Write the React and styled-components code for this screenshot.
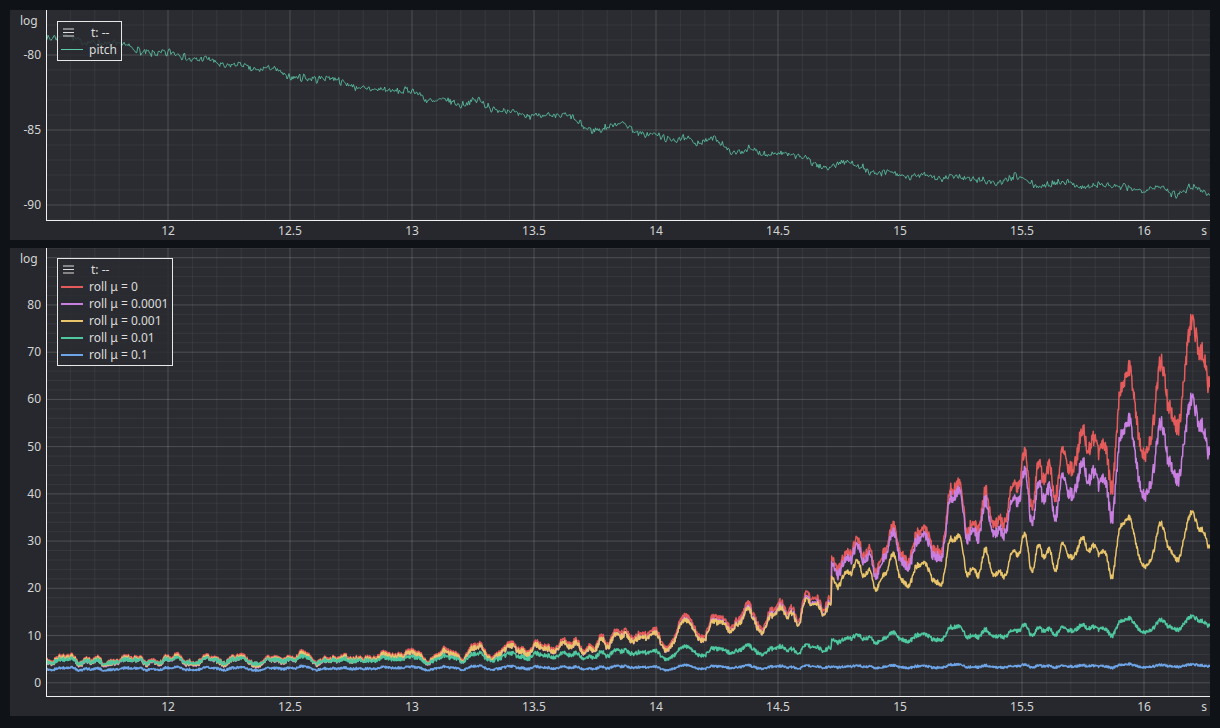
import React, { useMemo } from "react";
import styled, { createGlobalStyle } from "styled-components";

const Global = createGlobalStyle`
  html, body { margin: 0; padding: 0; background: #0f1217; }
  body { font-family: "Noto Sans", "Open Sans", sans-serif; }
`;

const Page = styled.div`
  width: 1220px; height: 728px; box-sizing: border-box;
  padding: 10px 10px 12px 10px;
  display: flex; flex-direction: column; gap: 8px;
  background: #0f1217;
`;
const Panel = styled.div`
  position: relative;
  height: ${(p) => p.h}px;
  background: #26282d;
`;
const Legend = styled.div`
  position: absolute; left: ${(p) => p.x}px; top: ${(p) => p.y}px;
  border: 1px solid #e8e8e8; background: rgba(42,44,49,0.85);
  padding: 2px 4px 2px 3px; color: #dcdcdc; font-size: 12px; line-height: 17px;
`;
const LegendRow = styled.div`
  display: flex; align-items: center; gap: 6px; white-space: nowrap;
`;
const Swatch = styled.span`
  display: inline-block; width: 22px; height: ${(p) => (p.thin ? 1 : 2)}px;
  background: ${(p) => p.c};
`;
const Burger = styled.span`
  display: inline-flex; width: 22px; justify-content: flex-start; padding-left: 2px;
`;

function rng(seed) {
  return function () {
    seed |= 0; seed = (seed + 0x6d2b79f5) | 0;
    let t = Math.imul(seed ^ (seed >>> 15), 1 | seed);
    t = (t + Math.imul(t ^ (t >>> 7), 61 | t)) ^ t;
    return ((t ^ (t >>> 14)) >>> 0) / 4294967296;
  };
}
function makeOsc(seed, n, fmin, fmax) {
  const r = rng(seed);
  const comps = [];
  for (let i = 0; i < n; i++) comps.push([fmin + r() * (fmax - fmin), r() * 6.28, 0.5 + r()]);
  const norm = comps.reduce((a, c) => a + c[2], 0);
  return (t) => comps.reduce((a, c) => a + c[2] * Math.sin(c[0] * t * 6.283 + c[1]), 0) / norm;
}

const X0 = 11.5, PXU = 244, LEFT = 36;

function Chart({ w, h, plotH, yMin, yMax, majorY, minorY, series, lw }) {
  const plotW = w - LEFT;
  const sx = (t) => LEFT + (t - X0) * PXU;
  const sy = (v) => ((yMax - v) / (yMax - yMin)) * plotH;
  const xMax = X0 + plotW / PXU;
  const grid = [];
  for (let i = 1; X0 + i * 0.1 < xMax; i++) {
    const t = X0 + i * 0.1;
    const major = i % 5 === 0;
    grid.push(<line key={"x" + i} x1={sx(t)} x2={sx(t)} y1={0} y2={plotH} stroke={major ? "rgba(255,255,255,0.17)" : "rgba(255,255,255,0.06)"} />);
  }
  for (let v = Math.ceil(yMin / minorY) * minorY; v < yMax; v += minorY) {
    const major = Math.abs(v / majorY - Math.round(v / majorY)) < 0.01;
    grid.push(<line key={"y" + v} x1={LEFT} x2={w} y1={sy(v)} y2={sy(v)} stroke={major ? "rgba(255,255,255,0.17)" : "rgba(255,255,255,0.06)"} />);
  }
  const xl = [];
  for (let i = 0; i < 9; i++) {
    const t = 12 + i * 0.5;
    xl.push(<text key={i} x={sx(t)} y={plotH + 15} textAnchor="middle">{i % 2 ? t.toFixed(1) : String(t)}</text>);
  }
  const yl = [];
  for (let v = Math.ceil(yMin / majorY) * majorY; v < yMax; v += majorY)
    if (sy(v) > 30) yl.push(<text key={v} x={LEFT - 5} y={sy(v) + 4} textAnchor="end">{v}</text>);
  return (
    <svg width={w} height={h} style={{ display: "block" }} fontFamily="Noto Sans, sans-serif" fontSize="12" fill="#d4d4d4">
      <rect x={LEFT} y={0} width={plotW} height={plotH} fill="#2a2c31" />
      {grid}
      <clipPath id={"c" + h}><rect x={LEFT} y={0} width={plotW} height={plotH} /></clipPath>
      <g clipPath={`url(#c${h})`}>
        {series.map((s, i) => (
          <polyline key={i} fill="none" stroke={s.c} strokeWidth={lw} strokeLinejoin="round"
            points={s.pts.map(([t, v]) => `${sx(t).toFixed(1)},${sy(v).toFixed(1)}`).join(" ")} />
        ))}
      </g>
      <line x1={LEFT + 0.5} x2={LEFT + 0.5} y1={0} y2={plotH} stroke="#f0f0f0" />
      <line x1={LEFT} x2={w} y1={plotH + 0.5} y2={plotH + 0.5} stroke="#f0f0f0" />
      {xl}{yl}
      <text x={10} y={15}>log</text>
      <text x={w - 6} y={plotH + 15} textAnchor="middle">s</text>
    </svg>
  );
}

function useData() {
  return useMemo(() => {
    const N = 2400, tEnd = 16.3;
    const ts = []; for (let i = 0; i <= N; i++) ts.push(X0 + (i / N) * (tEnd - X0));
    const r = rng(7);
    const o1 = makeOsc(3, 9, 2.5, 9), o2 = makeOsc(11, 8, 10, 30);
    const o3 = makeOsc(21, 6, 1, 4), o4 = makeOsc(5, 10, 20, 60);
    const pts = [];
    for (let i = 0; i <= 1200; i++) pts.push(X0 + (i / 1200) * (tEnd - X0));
    const pbase = (t) => (t < 15 ? -78.6 - 9.4 * (t - X0) / 3.5 : -88 - 0.9 * (t - 15));
    const pitch = pts.map((t) => [t, pbase(t) + 0.45 * o3(t * 1.5) + 0.35 * o1(t) + 0.25 * o4(t) + (r() - 0.5) * 0.35]);
    const jump = 14.72;
    const env = (t) => (t < jump ? 5 + 13 * Math.pow((t - X0) / (jump - X0), 3.4) : 26 + 42 * Math.pow((t - jump) / 1.55, 1.5));
    const noise = ts.map(() => r() - 0.5);
    const osc = ts.map((t) => 0.75 * o1(t) + 0.35 * o2(t) + 0.15 * o3(t));
    const mk = (f) => ts.map((t, i) => [t, f(t, i)]);
    const red = mk((t, i) => env(t) * (1 + 0.5 * osc[i]) + noise[i] * (0.6 + env(t) * 0.06));
    const purple = mk((t, i) => {
      const k = t < 15.3 ? 0.97 : 0.97 - (t - 15.3) * 0.2;
      return red[i][1] * k - 0.4;
    });
    const yenv = (t) => (t < jump ? env(t) * 0.93 : 22 + 9 * ((t - jump) / 1.55));
    const yellow = mk((t, i) => yenv(t) * (1 + 0.5 * osc[i]) + noise[i] * 1.2);
    const genv = (t) => (t < 13 ? 4.5 + (t - X0) * 0.3 : t < jump ? 5 + (t - 13) * 1.4 : 9 + (t - jump) * 2.4);
    const green = mk((t, i) => genv(t) * (1 + 0.35 * osc[i]) + noise[i] * 0.9);
    const blue = mk((t, i) => 2.9 + (t - X0) * 0.15 + 0.9 * osc[i] + noise[i] * 0.5);
    return { pitch, red, purple, yellow, green, blue };
  }, []);
}

const Hamburger = () => (
  <svg width="11" height="9" viewBox="0 0 11 9"><path d="M0 1h11M0 4.5h11M0 8h11" stroke="#e0e0e0" strokeWidth="1.2" /></svg>
);

export default function App() {
  const d = useData();
  const cols = { red: "#e55b5b", purple: "#c97fe0", yellow: "#e9c46a", green: "#4fc79f", blue: "#6ea5e8" };
  return (
    <>
      <Global />
      <Page>
        <Panel h={230}>
          <Chart w={1200} h={230} plotH={210} yMin={-91} yMax={-77} majorY={5} minorY={1} lw={0.8}
            series={[{ c: "#5fcaa8", pts: d.pitch }]} />
          <Legend x={47} y={11}>
            <LegendRow><Burger><Hamburger /></Burger>t: --</LegendRow>
            <LegendRow><Swatch c="#5fcaa8" thin />pitch</LegendRow>
          </Legend>
        </Panel>
        <Panel h={468}>
          <Chart w={1200} h={468} plotH={448} yMin={-2.8} yMax={92.06} majorY={10} minorY={2} lw={1.5}
            series={[
              { c: cols.red, pts: d.red }, { c: cols.purple, pts: d.purple }, { c: cols.yellow, pts: d.yellow },
              { c: cols.green, pts: d.green }, { c: cols.blue, pts: d.blue },
            ]} />
          <Legend x={47} y={10}>
            <LegendRow><Burger><Hamburger /></Burger>t: --</LegendRow>
            <LegendRow><Swatch c={cols.red} />roll μ = 0</LegendRow>
            <LegendRow><Swatch c={cols.purple} />roll μ = 0.0001</LegendRow>
            <LegendRow><Swatch c={cols.yellow} />roll μ = 0.001</LegendRow>
            <LegendRow><Swatch c={cols.green} />roll μ = 0.01</LegendRow>
            <LegendRow><Swatch c={cols.blue} />roll μ = 0.1</LegendRow>
          </Legend>
        </Panel>
      </Page>
    </>
  );
}
